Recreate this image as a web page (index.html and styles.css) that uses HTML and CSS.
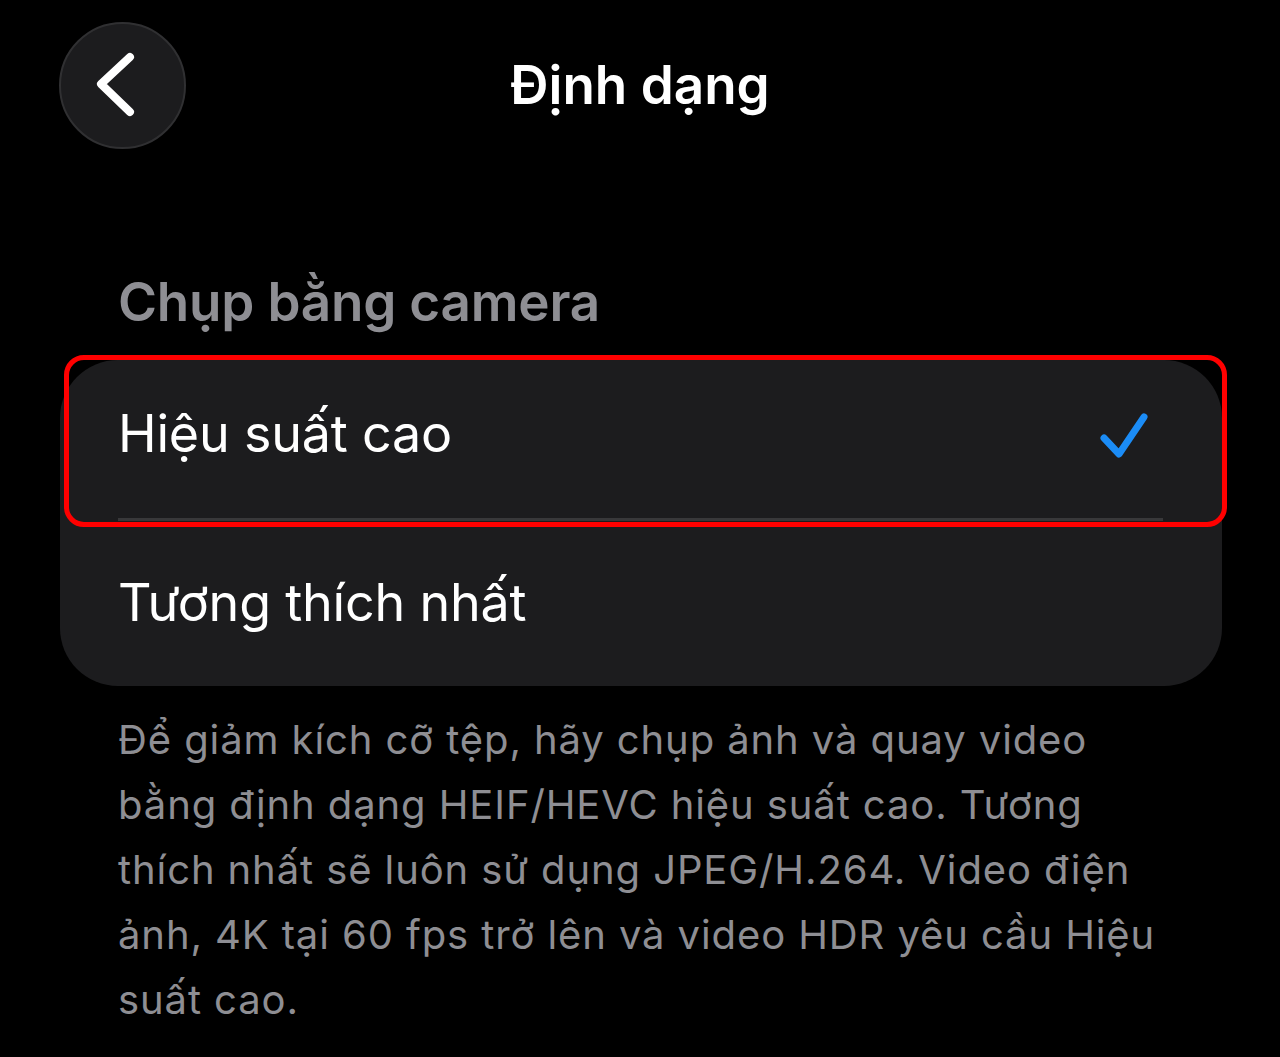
FILE: index.html
```html
<!DOCTYPE html>
<html lang="vi">
<head>
<meta charset="utf-8">
<title>Định dạng</title>
<link rel="stylesheet" href="styles.css">
</head>
<body>
<div class="screen">
  <header class="nav">
    <div class="nav-side">
      <button class="back" aria-label="Quay lại">
        <svg width="60" height="80" viewBox="0 0 60 80" aria-hidden="true">
          <path d="M41 8 L12 35 L41 63" fill="none" stroke="#ffffff" stroke-width="8" stroke-linecap="round" stroke-linejoin="round"/>
        </svg>
      </button>
    </div>
    <h1 class="title">Định dạng</h1>
    <div class="nav-side"></div>
  </header>

  <section class="group">
    <h2 class="group-title">Chụp bằng camera</h2>
    <div class="card">
      <div class="row row-first">
        <span class="row-label">Hiệu suất cao</span>
        <svg class="check" width="60" height="60" viewBox="0 0 60 60" aria-hidden="true">
          <path d="M8 26 L23 42 L48 5" fill="none" stroke="#1b8cf6" stroke-width="7" stroke-linecap="round" stroke-linejoin="round"/>
        </svg>
      </div>
      <div class="row row-last">
        <span class="row-label">Tương thích nhất</span>
      </div>
      <div class="highlight"></div>
    </div>
    <p class="footer">Để giảm kích cỡ tệp, hãy chụp ảnh và quay video<br>bằng định dạng HEIF/HEVC hiệu suất cao. Tương<br>thích nhất sẽ luôn sử dụng JPEG/H.264. Video điện<br>ảnh, 4K tại 60 fps trở lên và video HDR yêu cầu Hiệu<br>suất cao.</p>
  </section>
</div>
</body>
</html>
```

FILE: styles.css
```css
html, body {
  margin: 0;
  padding: 0;
  background: #000000;
}

body {
  font-family: Inter, "Noto Sans", "Liberation Sans", sans-serif;
  color: #ffffff;
  width: 1280px;
  height: 1057px;
  overflow: hidden;
}

.screen {
  display: flex;
  flex-direction: column;
}

.nav {
  display: grid;
  grid-template-columns: 1fr auto 1fr;
  align-items: center;
  padding-top: 22px;
  height: 127px;
}

.nav-side {
  display: flex;
  align-items: center;
}

.back {
  margin-left: 59px;
  width: 127px;
  height: 127px;
  border-radius: 50%;
  background: #1c1c1e;
  border: 2px solid #303032;
  box-sizing: border-box;
  display: flex;
  align-items: center;
  justify-content: center;
  padding: 0 8px 0 0;
  cursor: pointer;
}

.back svg {
  display: block;
  margin-top: 6px;
}

.title {
  margin: 0;
  font-size: 53px;
  font-weight: 600;
  line-height: 1;
  letter-spacing: 0;
  color: #ffffff;
}

.group {
  display: flex;
  flex-direction: column;
  padding: 0 58px 0 60px;
}

.group-title {
  margin: 127px 0 0 58px;
  font-size: 53px;
  font-weight: 600;
  line-height: 1;
  color: #8e8e93;
  letter-spacing: -0.2px;
}

.card {
  position: relative;
  margin-top: 31px;
  width: 1162px;
  background: #1c1c1e;
  border-radius: 58px;
}

.row {
  position: relative;
  display: flex;
  align-items: center;
  justify-content: space-between;
  padding: 0 58px;
}

.row-first {
  padding-top: 48px;
  padding-bottom: 61px;
}

.row-last {
  padding-top: 56px;
  padding-bottom: 57px;
}

.row-first::after {
  content: "";
  position: absolute;
  left: 58px;
  right: 59px;
  bottom: 0;
  height: 3px;
  background: #38383a;
}

.row-label {
  font-size: 52px;
  line-height: 1;
  font-weight: 400;
  color: #ffffff;
  letter-spacing: -0.2px;
}

.check {
  display: block;
  margin: -4px 8px -4px 0;
  transform: translateY(8px);
}

.highlight {
  position: absolute;
  left: 4px;
  top: -5px;
  width: 1163px;
  height: 172px;
  box-sizing: border-box;
  border: 5px solid #ff0000;
  border-radius: 20px;
  pointer-events: none;
}

.footer {
  margin: 21px 0 0 58px;
  font-size: 40px;
  line-height: 65px;
  font-weight: 400;
  color: #8e8e93;
  white-space: nowrap;
  letter-spacing: 0.9px;
}
```
